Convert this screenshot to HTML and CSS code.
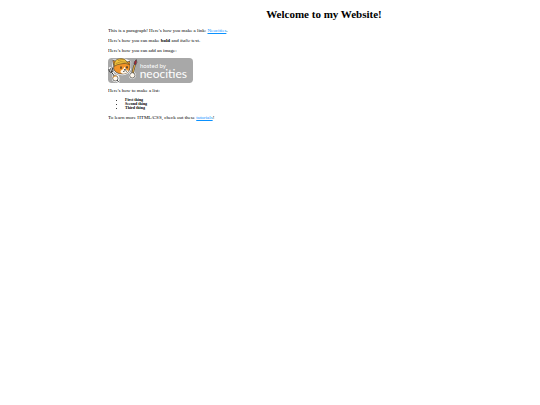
FILE: index.html
```
<!DOCTYPE html>
<html lang="en">
  <head>
    <meta charset="UTF-8">
    <meta name="viewport" content="width=device-width, initial-scale=1.0">
    <title>The web site of my dreams</title>
    <link rel="stylesheet" href="styles.css">
  </head>
  <body>
    <h1>Welcome to my Website!</h1>

    <p>This is a paragraph! Here's how you make a link: <a href="https://neocities.org">Neocities</a>.</p>

    <p>Here's how you can make <strong>bold</strong> and <em>italic</em> text.</p>

    <p>Here's how you can add an image:</p>

    <svg class="badge" viewBox="0 0 255 75" role="img" aria-label="Hosted by Neocities">
      <rect width="255" height="75" rx="11" fill="#a8a8a8"/>

      <!-- white outline behind the cat -->
      <g fill="#fff" stroke="#fff" stroke-width="7" stroke-linejoin="round" stroke-linecap="round">
        <path d="M16 8 L29 7 Q42 0 54 7 L66 12 L65 34 Q58 49 42 48 Q24 47 17 33 Z"/>
        <path d="M6 31 L22 60 L31 71 M83 10 L73 52" fill="none"/>
        <circle cx="23" cy="61" r="8"/>
        <circle cx="73" cy="52" r="7"/>
      </g>

      <!-- fork -->
      <g fill="none" stroke="#333" stroke-width="3" stroke-linecap="round">
        <path d="M3 34 Q3 44 11 43 Q17 41 14 30 M8 32 L11 43 L31 71"/>
      </g>

      <!-- brush -->
      <path d="M80 21 L73 49" stroke="#333" stroke-width="7"/>
      <path d="M80 21 L73 49" stroke="#d9a441" stroke-width="4"/>
      <path d="M78 19 Q78 8 85 5 Q89 13 83 21 Z" fill="#a52435" stroke="#333" stroke-width="2"/>

      <!-- paws -->
      <g fill="#fff8ed" stroke="#333" stroke-width="2">
        <circle cx="22" cy="61" r="8"/>
        <circle cx="73" cy="52" r="8"/>
      </g>
      <path d="M15 59 Q18 52 26 54" fill="none" stroke="#f39a2b" stroke-width="3"/>

      <!-- head -->
      <path d="M17 23 L14 7 L26 10 Q43 2 56 12 L66 10 L66 29 Q64 47 44 48 Q23 48 17 33 Z" fill="#f39428" stroke="#333" stroke-width="2"/>
      <path d="M50 26 Q46 35 38 38 Q35 44 45 47 Q59 46 62 38 Q53 37 50 26 Z" fill="#fff8ed"/>
      <path d="M19 25 Q16 6 34 2 Q51 -1 58 14 L65 20 Q52 13 37 18 Q27 19 19 25 Z" fill="#f2c33b" stroke="#5b471f" stroke-width="2"/>
      <path d="M23 17 Q38 7 56 13 M30 8 Q42 3 50 5" fill="none" stroke="#a47924" stroke-width="2"/>
      <g fill="#292929">
        <ellipse cx="39" cy="29" rx="2" ry="4"/>
        <ellipse cx="57" cy="28" rx="2" ry="4"/>
        <path d="M47 33 L54 33 L51 37 Z"/>
      </g>
      <path d="M45 40 Q49 43 51 37 Q54 42 57 39" fill="none" stroke="#292929" stroke-width="2"/>

      <text class="badge-small" x="96" y="29">hosted by</text>
      <text class="badge-name" x="95" y="60">neocities</text>
    </svg>

    <p>Here's how to make a list:</p>

    <ul>
      <li>First thing</li>
      <li>Second thing</li>
      <li>Third thing</li>
    </ul>

    <p>To learn more HTML/CSS, check out these <a href="https://neocities.org/tutorials">tutorials</a>!</p>
  </body>
</html>
```
FILE: styles.css
```
body {
  margin: 8px 0 8px 20%;
  background-color: white;
  color: black;
  font-family: "Liberation Serif", "Times New Roman", serif;
  font-size: 5px;
  line-height: 5px;
}

h1 {
  margin: 0 0 8px;
  font-size: 11px;
  line-height: 12px;
  text-align: center;
}

p {
  margin: 5px 0;
}

a {
  color: #0a91ff;
}

.badge {
  display: block;
  width: 85px;
  height: 25px;
}

.badge text {
  fill: white;
  font-family: Lato, sans-serif;
}

.badge-small {
  font-size: 18px;
}

.badge-name {
  font-size: 36px;
}

ul {
  margin: 5px 0;
  padding-left: 17px;
  font-size: 4px;
  font-weight: bold;
  line-height: 4px;
}
```
